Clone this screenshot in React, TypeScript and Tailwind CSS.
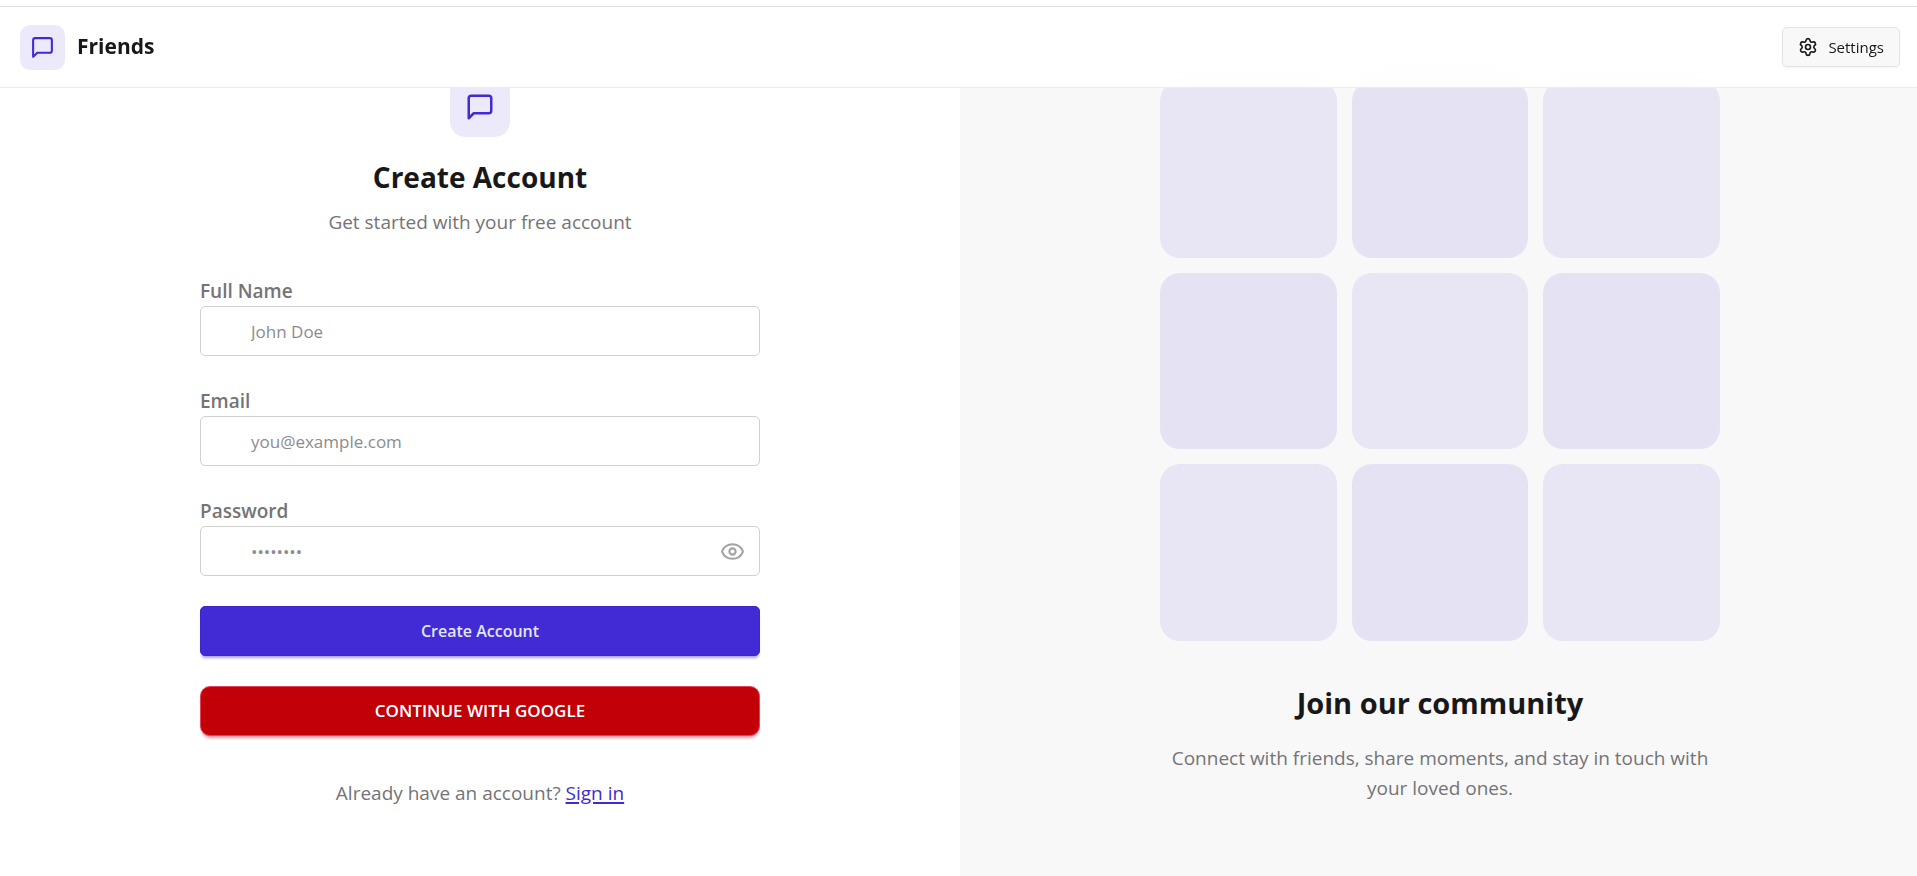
import { useState } from "react";
import { Eye, EyeOff, Settings } from "lucide-react";

function ChatIcon({ className }: { className: string }) {
  return (
    <svg
      viewBox="0 0 24 24"
      fill="none"
      stroke="currentColor"
      strokeWidth="2"
      strokeLinecap="round"
      strokeLinejoin="round"
      className={className}
      aria-hidden="true"
    >
      <path d="M21 15a2 2 0 0 1-2 2H7l-4 4V5a2 2 0 0 1 2-2h14a2 2 0 0 1 2 2z" />
    </svg>
  );
}

function Navbar() {
  return (
    <header className="absolute inset-x-0 top-[7px] z-10 flex h-[81px] items-center justify-between border-b border-[#ececed] bg-white/90 px-5 backdrop-blur-lg">
      <a href="#" className="flex items-center gap-3">
        <span className="flex size-[45px] items-center justify-center rounded-[10px] bg-[#ece9fa]">
          <ChatIcon className="size-[25px] text-[#422ad5]" />
        </span>
        <span className="text-[21px] font-bold">Friends</span>
      </a>
      <button
        type="button"
        className="flex h-10 items-center gap-[10px] rounded-[5px] border border-[#e5e5e5] bg-[#f8f8f8] px-[15px] text-[15px] font-medium shadow-xs"
      >
        <Settings className="size-5" />
        Settings
      </button>
    </header>
  );
}

const inputClass =
  "h-[50px] w-full rounded-[5px] border border-[#d1d1d1] bg-white pr-[50px] pl-[50px] text-[17px] placeholder:text-[#8c8c8e] focus:outline-2 focus:outline-offset-2 focus:outline-[#422ad5]";

const labelClass = "text-[19px] leading-[30px] font-semibold text-[#747476]";

function SignUpForm() {
  const [showPassword, setShowPassword] = useState(false);

  return (
    <div className="flex w-full max-w-[560px] flex-col">
      <div className="flex flex-col items-center gap-[10px] text-center">
        <div className="flex size-[60px] items-center justify-center rounded-[15px] bg-[#ece9fa]">
          <ChatIcon className="size-[30px] text-[#422ad5]" />
        </div>
        <h1 className="mt-[10px] text-[28px] leading-10 font-bold">Create Account</h1>
        <p className="text-[19px] leading-[30px] text-[#747476]">Get started with your free account</p>
      </div>

      <form className="mt-[39px] flex flex-col gap-[30px]" onSubmit={(e) => e.preventDefault()}>
        <div className="flex flex-col">
          <label htmlFor="name" className={labelClass}>Full Name</label>
          <input id="name" type="text" placeholder="John Doe" className={inputClass} />
        </div>
        <div className="flex flex-col">
          <label htmlFor="email" className={labelClass}>Email</label>
          <input id="email" type="email" placeholder="you@example.com" className={inputClass} />
        </div>
        <div className="flex flex-col">
          <label htmlFor="password" className={labelClass}>Password</label>
          <div className="relative">
            <input
              id="password"
              type={showPassword ? "text" : "password"}
              placeholder="••••••••"
              className={inputClass}
            />
            <button
              type="button"
              aria-label={showPassword ? "Hide password" : "Show password"}
              onClick={() => setShowPassword(!showPassword)}
              className="absolute inset-y-0 right-0 flex items-center pr-[15px] text-[#a3a3a4]"
            >
              {showPassword ? <EyeOff className="size-[25px]" /> : <Eye className="size-[25px]" />}
            </button>
          </div>
        </div>
        <button
          type="submit"
          className="h-[50px] w-full rounded-[5px] border border-[#3e27ca] bg-[#422ad5] text-base font-semibold text-[#e0e7ff] shadow-[0_3px_3px_-2px_#422ad54d,0_4px_3px_-2px_#422ad54d]"
        >
          Create Account
        </button>
        <button
          type="button"
          className="h-[50px] w-full rounded-[10px] border border-[#e5405c] bg-[#c10007] text-[17px] font-semibold text-white shadow-[0_3px_3px_-2px_#ff637e80,0_4px_3px_-2px_#ff637e80]"
        >
          CONTINUE WITH GOOGLE
        </button>
      </form>

      <p className="mt-[42px] text-center text-[19px] leading-[30px] text-[#747476]">
        Already have an account?{" "}
        <a href="#" className="text-[#422ad5] underline decoration-2 underline-offset-2">Sign in</a>
      </p>
    </div>
  );
}

function CommunityPattern() {
  return (
    <div className="w-full max-w-[560px] text-center">
      <div className="grid grid-cols-3 gap-[15px]">
        {Array.from({ length: 9 }, (_, i) => (
          <div
            key={i}
            className={
              i % 2 === 0
                ? "aspect-square rounded-[20px] bg-[#e8e6f4]"
                : "aspect-square rounded-[20px] bg-[#e5e2f4]"
            }
          />
        ))}
      </div>
      <h2 className="mt-[42px] text-[29px] leading-10 font-bold">Join our community</h2>
      <p className="mt-5 text-[19px] leading-[30px] text-[#747476]">
        Connect with friends, share moments, and stay in touch with your loved ones.
      </p>
    </div>
  );
}

export default function App() {
  return (
    <div className="overflow-x-hidden bg-white font-['Open_Sans','Noto_Sans',sans-serif] text-[#18181b]">
      <div className="relative -mr-[3px]">
        <div className="absolute inset-x-0 top-0 z-20 h-[7px] border-b border-[#e0e0e0] bg-white" />
        <Navbar />
        <main className="grid min-h-screen grid-cols-2">
          <section className="flex justify-center px-10 pt-[77px] pb-10">
            <SignUpForm />
          </section>
          <section className="flex justify-center bg-[#f8f8f8] px-10 pt-[81px] pb-10">
            <CommunityPattern />
          </section>
        </main>
      </div>
    </div>
  );
}
